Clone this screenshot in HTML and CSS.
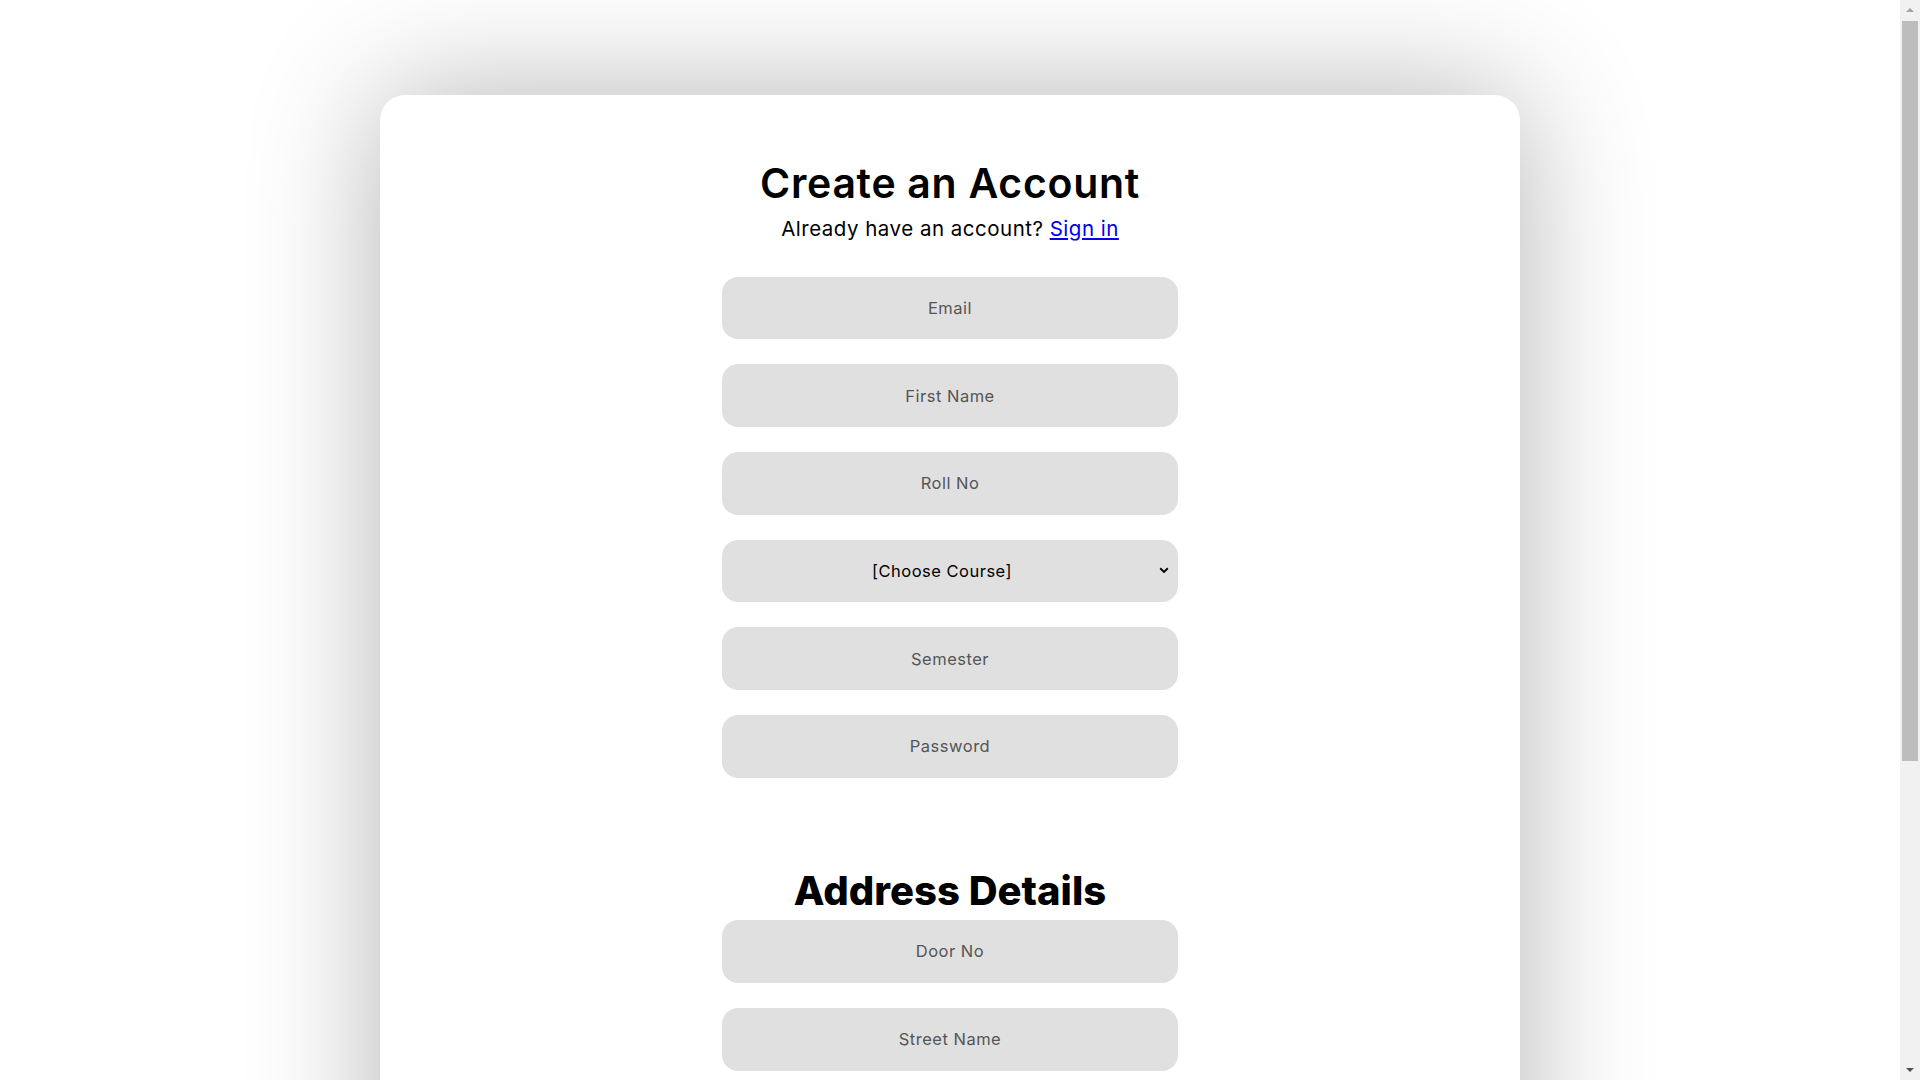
FILE: index.html
```html
<!DOCTYPE html>
<html lang="en">
<head>
<meta charset="utf-8">
<title>Create an Account</title>
<link rel="stylesheet" href="styles.css">
</head>
<body>
<div class="card">
  <form class="form">
    <h1 class="title">Create an Account</h1>
    <p class="subtitle">Already have an account? <a href="#" class="link">Sign in</a></p>
    <input class="field" type="email" placeholder="Email">
    <input class="field" type="text" placeholder="First Name">
    <input class="field" type="text" placeholder="Roll No">
    <select class="field select">
      <option>[Choose Course]</option>
      <option>B.Tech</option>
      <option>M.Tech</option>
    </select>
    <input class="field" type="text" placeholder="Semester">
    <input class="field" type="password" placeholder="Password">
    <h2 class="section-title">Address Details</h2>
    <input class="field" type="text" placeholder="Door No">
    <input class="field" type="text" placeholder="Street Name">
    <input class="field" type="text" placeholder="City">
    <input class="field" type="text" placeholder="Pincode">
    <button class="submit" type="button">Sign Up</button>
  </form>
</div>
<div class="scrollbar" aria-hidden="true">
  <span class="arrow arrow-up"></span>
  <span class="thumb"></span>
  <span class="arrow arrow-down"></span>
</div>
</body>
</html>
```
FILE: styles.css
```css
html, body {
  margin: 0;
  padding: 0;
  background: #ffffff;
}

body {
  font-family: Inter, "Open Sans", sans-serif;
  color: #000;
  padding: 95px 20px 95px 0;
}

.card {
  width: 60%;
  margin: 0 auto;
  background: #ffffff;
  border-radius: 25px;
  box-shadow: 0 0 130px rgba(0, 0, 0, 0.3);
  padding: 63.5px 0 60px;
}

.form {
  width: 40%;
  margin: 0 auto;
  display: flex;
  flex-direction: column;
  align-items: stretch;
}

.title {
  margin: 0;
  text-align: center;
  font-size: 41px;
  line-height: 48px;
  font-weight: 600;
  letter-spacing: 0.7px;
}

.subtitle {
  margin: 10px 0 36px;
  text-align: center;
  font-size: 20.5px;
  line-height: 24px;
  font-weight: 400;
  letter-spacing: 0.5px;
}

.link {
  color: #0000ee;
  text-decoration: underline;
}

.field {
  box-sizing: border-box;
  height: 62.7px;
  margin: 0 0 25px;
  border: none;
  outline: none;
  border-radius: 16px;
  background-color: #e0e0e0;
  font-family: inherit;
  font-size: 16.5px;
  letter-spacing: 0.5px;
  text-align: center;
  color: #000;
  padding: 0 8px;
}

.field::placeholder {
  color: #555555;
}

.select {
  appearance: none;
  -webkit-appearance: none;
  text-align-last: center;
  padding: 0 24px 0 8px;
  cursor: pointer;
  background-image: url("data:image/svg+xml,%3Csvg xmlns='http://www.w3.org/2000/svg' width='10' height='7' viewBox='0 0 10 7'%3E%3Cpath d='M1.2 1.3 L5 5 L8.8 1.3' fill='none' stroke='%23000' stroke-width='1.9'/%3E%3C/svg%3E");
  background-repeat: no-repeat;
  background-position: right 9px center;
  background-size: 10px 7px;
}

.section-title {
  margin: 64px 0 5.5px;
  text-align: center;
  font-size: 40px;
  line-height: 48px;
  font-weight: 800;
  letter-spacing: 0;
}

.submit {
  height: 62.7px;
  border: none;
  border-radius: 16px;
  background: #000;
  color: #fff;
  font-family: inherit;
  font-size: 18px;
  font-weight: 600;
  margin-top: 10px;
}

.scrollbar {
  position: fixed;
  top: 0;
  right: 0;
  width: 20px;
  height: 100vh;
  background: #f1f1f1;
}

.thumb {
  position: absolute;
  top: 21px;
  left: 2px;
  right: 2px;
  height: 740px;
  background: #bdbdbd;
}

.arrow {
  position: absolute;
  left: 6px;
  width: 0;
  height: 0;
  border-left: 4px solid transparent;
  border-right: 4px solid transparent;
}

.arrow-up {
  top: 8px;
  border-bottom: 4px solid #a3a3a3;
}

.arrow-down {
  bottom: 8px;
  border-top: 4px solid #505050;
}
```
